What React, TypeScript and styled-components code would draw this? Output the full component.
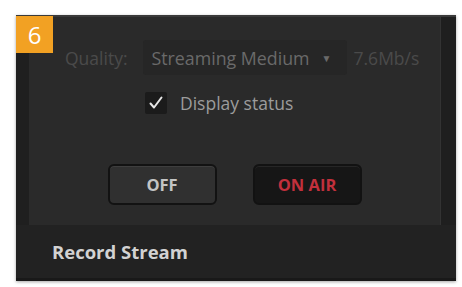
import styled, { createGlobalStyle } from "styled-components";

const GlobalStyle = createGlobalStyle`
  html, body {
    margin: 0;
    padding: 0;
    background: #ffffff;
  }
  body {
    font-family: "Open Sans", "Liberation Sans", sans-serif;
  }
`;

const Page = styled.div`
  width: 462px;
  height: 287px;
  box-sizing: border-box;
  padding: 15px 6px 6px 16px;
`;

const Frame = styled.div`
  position: relative;
  width: 440px;
  height: 266px;
  display: flex;
  flex-direction: column;
  background: #1f1f1f;
  border-top: 2px solid #3a3a3a;
  box-sizing: border-box;
  box-shadow: 0 1px 3px rgba(0, 0, 0, 0.35);
`;

const Badge = styled.div`
  position: absolute;
  top: -1px;
  left: 0;
  width: 37px;
  height: 37px;
  background: #f2a123;
  color: #ffffff;
  font-size: 24px;
  font-weight: 500;
  display: flex;
  align-items: center;
  justify-content: center;
`;

const Panel = styled.div`
  margin: 0 15px 0 13px;
  height: 208px;
  background: #2a2a2a;
  border-right: 1px solid #333;
  box-sizing: border-box;
  padding: 23px 0 0 0;
  display: flex;
  flex-direction: column;
`;

const QualityRow = styled.div`
  display: flex;
  align-items: center;
  padding-left: 36px;
  height: 35px;
`;

const DimLabel = styled.span`
  color: #4a4a4a;
  font-size: 17.5px;
`;

const Select = styled.div`
  margin-left: 15px;
  margin-right: 7px;
  width: 204px;
  height: 35px;
  box-sizing: border-box;
  padding-left: 9px;
  display: flex;
  align-items: center;
  gap: 12px;
  background: #262626;
  border-radius: 3px;
  color: #6a6a6a;
  font-size: 17.8px;
`;

const Caret = styled.span`
  font-size: 10px;
  color: #6a6a6a;
`;

const CheckRow = styled.div`
  display: flex;
  align-items: center;
  gap: 13px;
  margin-top: 16px;
  padding-left: 116px;
`;

const CheckBox = styled.div`
  width: 22px;
  height: 22px;
  background: #1b1b1b;
  border-radius: 2px;
  display: flex;
  align-items: center;
  justify-content: center;
`;

const CheckLabel = styled.span`
  color: #9c9c9c;
  font-size: 17.5px;
`;

const ButtonRow = styled.div`
  display: flex;
  justify-content: center;
  gap: 36px;
  margin-top: 49px;
`;

const Button = styled.button<{ $live?: boolean }>`
  width: 109px;
  height: 41px;
  border-radius: 6px;
  border: 2px solid #121212;
  background: ${(p) => (p.$live ? "#161616" : "#303030")};
  color: ${(p) => (p.$live ? "#c2303c" : "#c4c4c4")};
  font-family: "Open Sans", "Liberation Sans", sans-serif;
  font-size: 16.5px;
  font-weight: 700;
  padding: 0;
  box-shadow: inset 0 1px 0 rgba(255, 255, 255, 0.07);
`;

const Footer = styled.div`
  flex: 1;
  display: flex;
  align-items: center;
  padding-left: 36px;
  background: #222222;
  border-bottom: 3px solid #191919;
  color: #d2d2d2;
  font-size: 18.5px;
  font-weight: 700;
`;

function Check() {
  return (
    <svg width="16" height="16" viewBox="0 0 16 16">
      <path
        d="M2.5 8.5 L6 12.5 L13.5 2.5"
        fill="none"
        stroke="#e6e6e6"
        strokeWidth="2"
        strokeLinecap="round"
        strokeLinejoin="round"
      />
    </svg>
  );
}

export default function App() {
  return (
    <Page>
      <GlobalStyle />
      <Frame>
        <Badge>6</Badge>
        <Panel>
          <QualityRow>
            <DimLabel>Quality:</DimLabel>
            <Select>
              Streaming Medium <Caret>▼</Caret>
            </Select>
            <DimLabel>7.6Mb/s</DimLabel>
          </QualityRow>
          <CheckRow>
            <CheckBox>
              <Check />
            </CheckBox>
            <CheckLabel>Display status</CheckLabel>
          </CheckRow>
          <ButtonRow>
            <Button>OFF</Button>
            <Button $live>ON AIR</Button>
          </ButtonRow>
        </Panel>
        <Footer>Record Stream</Footer>
      </Frame>
    </Page>
  );
}
